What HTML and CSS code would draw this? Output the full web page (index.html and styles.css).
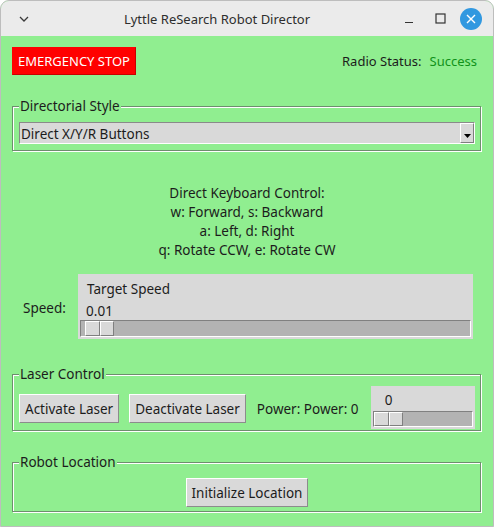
FILE: index.html
```html
<!DOCTYPE html>
<html>
<head>
<meta charset="utf-8">
<link rel="stylesheet" href="styles.css">
</head>
<body>
<div class="window">
  <div class="titlebar">
    <div class="tb-left">
      <svg width="10" height="6" viewBox="0 0 10 6"><path d="M1 1 L5 5 L9 1" fill="none" stroke="#3a3a3a" stroke-width="1.3"/></svg>
    </div>
    <div class="tb-title">Lyttle ReSearch Robot Director</div>
    <div class="tb-right">
      <div class="tb-btn"><svg width="10" height="10" viewBox="0 0 10 10"><path d="M1 8.5 H9" stroke="#333" stroke-width="1.2"/></svg></div>
      <div class="tb-btn"><svg width="11" height="11" viewBox="0 0 11 11"><rect x="1" y="1" width="9" height="9" fill="none" stroke="#333" stroke-width="1.2"/></svg></div>
      <div class="tb-close"><svg width="22" height="22" viewBox="0 0 22 22"><circle cx="11" cy="11" r="11" fill="#3198e0"/><path d="M7 7 L15 15 M15 7 L7 15" stroke="#fff" stroke-width="1.4"/></svg></div>
    </div>
  </div>
  <div class="content">
    <div class="top-row">
      <div class="estop">EMERGENCY STOP</div>
      <div class="radio"><span>Radio Status:</span><span class="ok">Success</span></div>
    </div>

    <div class="group group-style">
      <div class="group-title">Directorial Style</div>
      <div class="combo">
        <span class="combo-text">Direct X/Y/R Buttons</span>
        <span class="combo-arrow"><svg width="7" height="5" viewBox="0 0 7 5"><path d="M0 0 H7 L3.5 4 Z" fill="#000"/></svg></span>
      </div>
    </div>

    <div class="keys">
      <div>Direct Keyboard Control:</div>
      <div>w: Forward, s: Backward</div>
      <div>a: Left, d: Right</div>
      <div>q: Rotate CCW, e: Rotate CW</div>
    </div>

    <div class="speed-row">
      <div class="speed-label">Speed:</div>
      <div class="scale scale-big">
        <div class="scale-label">Target Speed</div>
        <div class="scale-value">0.01</div>
        <div class="trough"><div class="slider"><span></span><span></span></div></div>
      </div>
    </div>

    <div class="group group-laser">
      <div class="group-title">Laser Control</div>
      <div class="laser-row">
        <div class="btn">Activate Laser</div>
        <div class="btn">Deactivate Laser</div>
        <div class="power">Power: Power: 0</div>
        <div class="scale scale-mini">
          <div class="scale-value">0</div>
          <div class="trough"><div class="slider"><span></span><span></span></div></div>
        </div>
      </div>
    </div>

    <div class="group group-loc">
      <div class="group-title">Robot Location</div>
      <div class="loc-row">
        <div class="btn">Initialize Location</div>
      </div>
    </div>
  </div>
</div>
</body>
</html>
```
FILE: styles.css
```css
* { box-sizing: border-box; }
body {
  margin: 0;
  font-family: "Noto Sans", "Open Sans", sans-serif;
  font-size: 13.5px;
  color: #1c1c1c;
  background: #fff;
}
.window {
  width: 494px;
  height: 527px;
  border: 1px solid #bdbdbd;
  border-top-left-radius: 9px;
  border-top-right-radius: 9px;
  overflow: hidden;
  display: flex;
  flex-direction: column;
  background: #90ee90;
}
.titlebar {
  flex: none;
  height: 35px;
  background: #ebebeb;
  display: flex;
  align-items: center;
}
.tb-left {
  width: 46px;
  padding-left: 18px;
  display: flex;
  align-items: center;
  padding-top: 1px;
}
.tb-title {
  flex: 1;
  text-align: center;
  font-size: 13px;
  color: #2e2e2e;
  padding-top: 1px;
}
.tb-right {
  width: 106px;
  display: flex;
  align-items: center;
  padding-left: 10px;
}
.tb-btn {
  width: 24px;
  height: 24px;
  display: flex;
  align-items: center;
  justify-content: center;
  margin-right: 7px;
}
.tb-close {
  width: 22px;
  height: 22px;
  margin-left: 1px;
  display: flex;
}
.content {
  flex: 1;
  padding: 11px 10px 0 11px;
  display: flex;
  flex-direction: column;
}
.top-row {
  display: flex;
  justify-content: space-between;
  align-items: center;
  height: 28px;
}
.estop {
  height: 28px;
  background: #ff0000;
  color: #fff;
  font-size: 13px;
  padding: 0 5px;
  display: flex;
  align-items: center;
  border: 1px solid #ff0000;
  border-right-color: #c80000;
  border-bottom-color: #c80000;
}
.radio {
  display: flex;
  gap: 8px;
  padding-right: 6px;
  font-size: 13px;
}
.ok { color: #11921a; }

.group {
  border: 1px solid #6d8e6d;
  box-shadow: inset 1px 1px 0 #fff, 1px 1px 0 #fff;
  margin-right: 2px;
  display: flex;
  flex-direction: column;
  align-items: flex-start;
}
.group-title {
  margin-top: -9px;
  padding: 0 1px;
  height: 17px;
  line-height: 16px;
  background: #90ee90;
}
.group-style {
  margin-top: 31px;
  padding: 0 5px 6px 6px;
}
.combo {
  align-self: stretch;
  margin-top: 7px;
  height: 22px;
  background: #d9d9d9;
  border: 1px solid #fff;
  border-top-color: #8a8a8a;
  border-left-color: #8a8a8a;
  display: flex;
  align-items: center;
  padding-left: 1px;
}
.combo-text { flex: 1; padding-top: 2px; }
.combo-arrow {
  width: 14px;
  height: 20px;
  border: 1px solid #7f7f7f;
  border-top-color: #fff;
  border-left-color: #fff;
  display: flex;
  justify-content: center;
  align-items: flex-end;
  padding-bottom: 3px;
}

.keys {
  margin-top: 33px;
  text-align: center;
  line-height: 19px;
  padding-right: 1px;
}

.speed-row {
  margin-top: 14px;
  display: flex;
  align-items: center;
}
.speed-label {
  width: 66px;
  padding-left: 11px;
  padding-top: 2px;
}
.scale {
  background: #d9d9d9;
  padding: 0 2px 2px 2px;
}
.scale-big {
  width: 395px;
  height: 65px;
  padding-top: 6px;
}
.scale-label {
  height: 18px;
  line-height: 18px;
  padding-left: 7px;
}
.scale-value {
  height: 18px;
  line-height: 18px;
  width: 29px;
  text-align: center;
  white-space: nowrap;
  display: flex;
  justify-content: center;
}
.scale-big .scale-value {
  margin: 4px 0 0 5px;
}
.trough {
  height: 17px;
  background: #b3b3b3;
  border: 1px solid #fff;
  border-top-color: #808080;
  border-left-color: #808080;
  display: flex;
  padding-left: 4px;
}
.slider {
  width: 29px;
  height: 15px;
  display: flex;
}
.slider span {
  flex: 1;
  background: #d9d9d9;
  border: 1px solid #7f7f7f;
  border-top-color: #fff;
  border-left-color: #fff;
}

.group-laser {
  margin-top: 35px;
  padding: 0 5px 1px 6px;
}
.laser-row {
  margin-top: 3px;
  align-self: stretch;
  display: flex;
  align-items: center;
  height: 43px;
}
.btn {
  height: 29px;
  background: #d9d9d9;
  border: 1px solid #8c8c8c;
  border-top-color: #fff;
  border-left-color: #fff;
  padding: 1px 5px 0 5px;
  display: flex;
  align-items: center;
  white-space: nowrap;
}
.laser-row .btn { margin-top: 1px; }
.laser-row .btn + .btn { margin-left: 10px; }
.power { margin-left: 11px; padding-top: 3px; }
.scale-mini {
  margin-left: auto;
  width: 104px;
  height: 43px;
  padding-top: 5px;
}
.scale-mini .scale-value { margin-left: 1px; }
.scale-mini .trough { height: 16px; padding-left: 0; margin-top: 2px; }
.scale-mini .slider { height: 14px; }

.group-loc {
  margin-top: 31px;
  padding: 0 5px 4px 6px;
}
.loc-row {
  align-self: stretch;
  margin-top: 7px;
  display: flex;
  justify-content: center;
}
```
